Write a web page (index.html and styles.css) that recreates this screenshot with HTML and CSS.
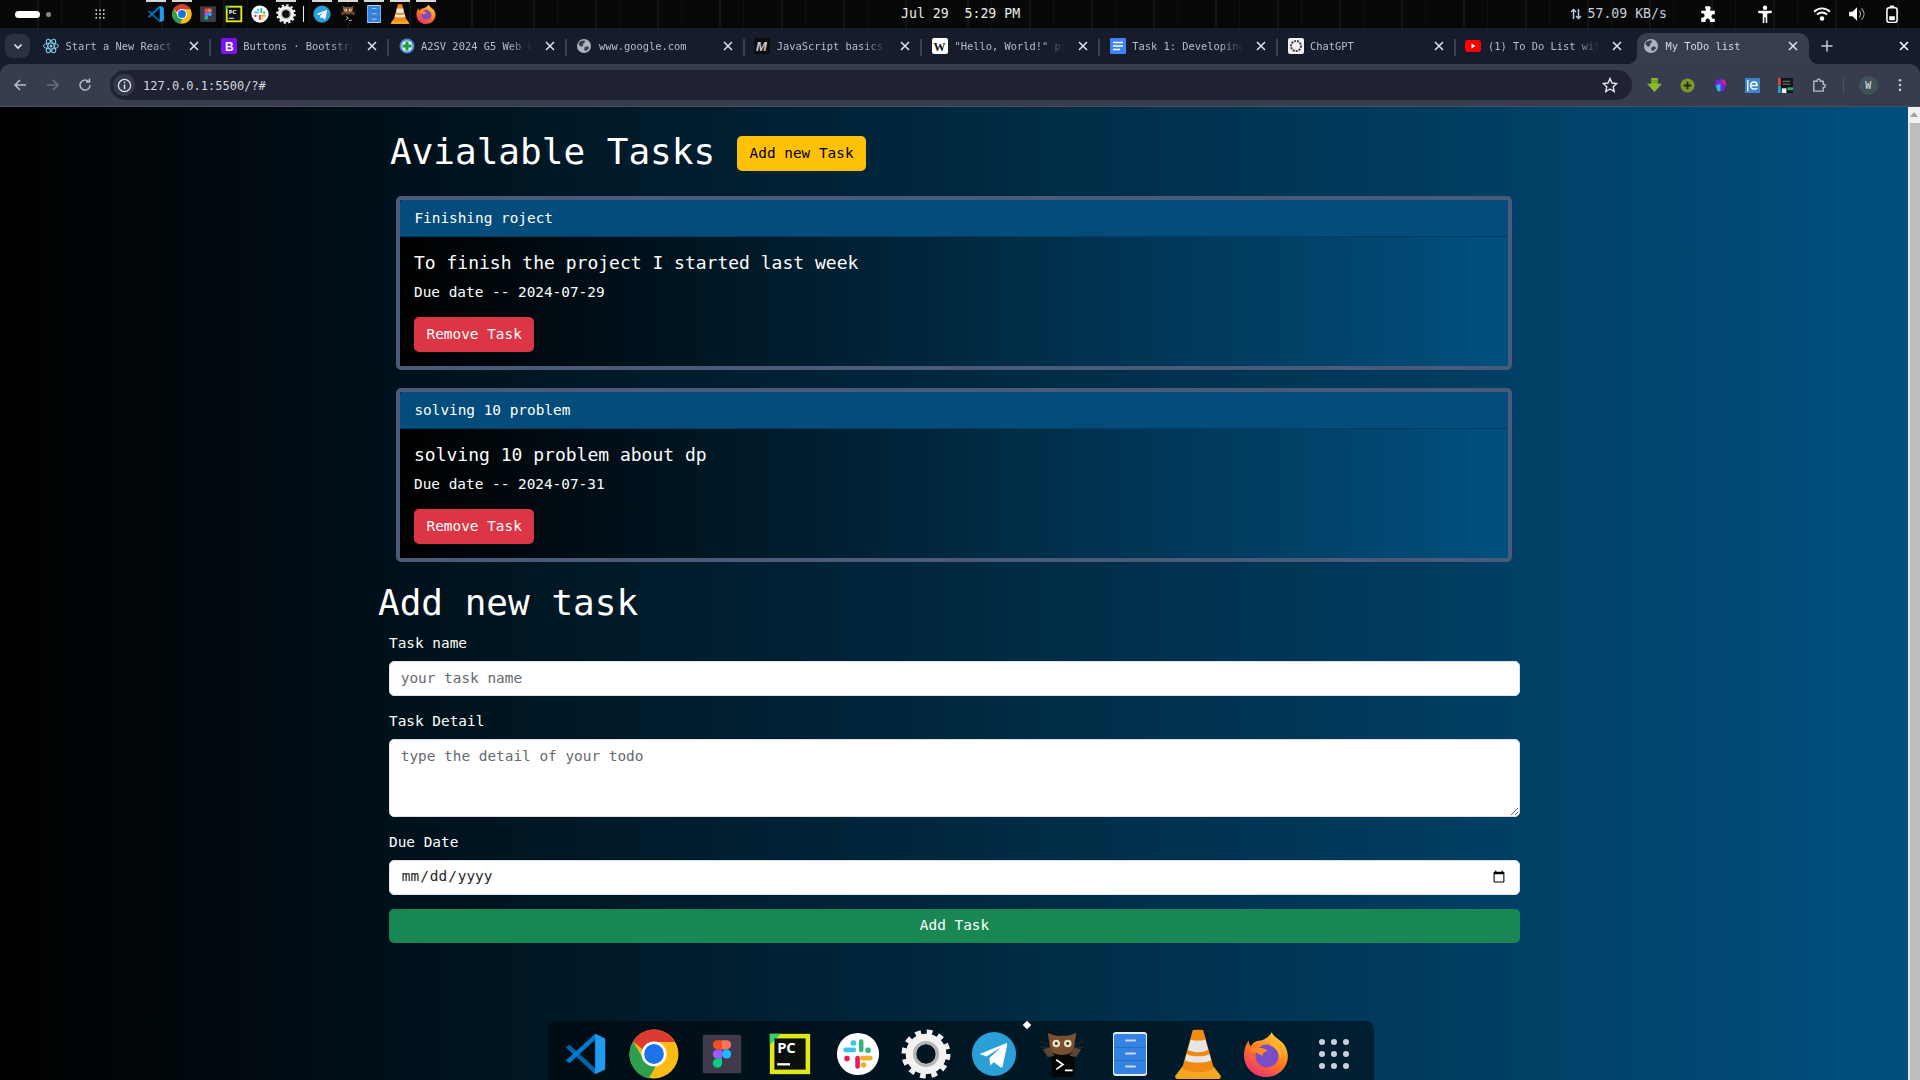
FILE: index.html
```html
<!DOCTYPE html>
<html lang="en">
<head>
<meta charset="utf-8">
<title>My ToDo list</title>
<link rel="stylesheet" href="styles.css">
</head>
<body>
<svg class="defs" aria-hidden="true">
  <defs>
    <linearGradient id="ffg" x1="0.800" y1="0" x2="0.200" y2="1">
      <stop offset="0" stop-color="#ffd43a"/>
      <stop offset="0.500" stop-color="#ff7a1a"/>
      <stop offset="1" stop-color="#ee2a7b"/>
    </linearGradient>
  </defs>
  <symbol id="vscode" viewBox="0 0 48 48">
    <path fill="#0065a9" d="M2 17l4-3 32 29-4 3z"/>
    <path fill="#007acc" d="M2 31l4 3L38 5l-4-3z"/>
    <path fill="#1f9cf0" d="M34 2l11 5v34l-11 5z"/>
  </symbol>
  <symbol id="chrome" viewBox="0 0 48 48">
    <circle cx="24" cy="24" r="23.5" fill="#fbbc16"/>
    <path fill="#db3a2e" d="M24 .5A23.500 23.500 0 0 1 44.400 12.500H24a11.500 11.500 0 0 0-10.600 7.500L4 12A23.500 23.500 0 0 1 24 .5z"/>
    <path fill="#2f9e4f" d="M4 12l10 17a11.500 11.500 0 0 0 12 6l-7 12.500A23.500 23.500 0 0 1 4 12z"/>
    <circle cx="24" cy="24" r="12" fill="#fff"/>
    <circle cx="24" cy="24" r="9.500" fill="#1a73e8"/>
  </symbol>
  <symbol id="figma" viewBox="0 0 48 48">
    <rect x="3" y="3" width="42" height="42" rx="2" fill="#3f3a4c"/>
    <path fill="#f24e1e" d="M24 9h-5a5 5 0 0 0 0 10h5z"/>
    <path fill="#ff7262" d="M24 9h5a5 5 0 0 1 0 10h-5z"/>
    <path fill="#a259ff" d="M24 19h-5a5 5 0 0 0 0 10h5z"/>
    <circle cx="29" cy="24" r="5" fill="#1abcfe"/>
    <path fill="#0acf83" d="M19 29h5v5a5 5 0 1 1-5-5z"/>
  </symbol>
  <symbol id="pycharm" viewBox="0 0 48 48">
    <rect x="2" y="2" width="44" height="44" fill="#dfe81a"/>
    <path fill="#2fd36e" d="M2 2h12L2 14z"/>
    <rect x="7" y="7" width="34" height="34" fill="#0b0f10"/>
    <rect x="10" y="34" width="14" height="2.500" fill="#fff"/>
  </symbol>
  <symbol id="slack" viewBox="0 0 48 48">
    <circle cx="24" cy="24" r="23" fill="#fff"/>
    <rect x="22" y="8" width="5" height="14" rx="2.500" fill="#2eb67d" transform="translate(3 0)"/>
    <rect x="32" y="17" width="6" height="6" rx="2.500" fill="#2eb67d"/>
    <rect x="8" y="17" width="14" height="5" rx="2.500" fill="#36c5f0"/>
    <rect x="16" y="9" width="6" height="6" rx="2.500" fill="#36c5f0"/>
    <rect x="21" y="26" width="5" height="14" rx="2.500" fill="#e01e5a"/>
    <rect x="9" y="26" width="6" height="6" rx="2.500" fill="#e01e5a"/>
    <rect x="26" y="26" width="14" height="5" rx="2.500" fill="#ecb22e"/>
    <rect x="27" y="33" width="6" height="6" rx="2.500" fill="#ecb22e"/>
  </symbol>
  <symbol id="gear" viewBox="0 0 48 48">
    <circle cx="24" cy="24" r="21" fill="none" stroke="#f2f2f2" stroke-width="5" stroke-dasharray="5.500 5.500"/>
    <circle cx="24" cy="24" r="14.500" fill="none" stroke="#f2f2f2" stroke-width="10"/>
    <circle cx="24" cy="24" r="11" fill="none" stroke="#b5b5b5" stroke-width="3"/>
  </symbol>
  <symbol id="telegram" viewBox="0 0 48 48">
    <circle cx="24" cy="24" r="23" fill="#2a9fd8"/>
    <path fill="#fff" d="M9 24l27-11c1-.4 2 .3 1.700 1.800L33 37c-.2 1.200-1.300 1.400-2.200.8l-7-5.300-3.800 3.600-.8-8 12-11-15 9.500z"/>
  </symbol>
  <symbol id="cat" viewBox="0 0 48 48">
    <rect x="13" y="24" width="24" height="24" rx="2" fill="#060606"/>
    <path fill="#7a4f31" d="M9 2l9 3h12l9-3-2 12c0 7-5 11-13 11s-13-4-13-11z"/>
    <path stroke="#222" stroke-width="1.500" d="M1 11l9 3M1 17h9M47 11l-9 3M47 17h-9"/>
    <path fill="#5d4434" d="M4 19l8-2 4 9-7 1zM44 19l-8-2-4 9 7 1z"/>
    <circle cx="18" cy="13" r="4" fill="#e8e0b8"/>
    <circle cx="30" cy="13" r="4" fill="#e8e0b8"/>
    <circle cx="18" cy="13" r="1.500" fill="#333"/>
    <circle cx="30" cy="13" r="1.500" fill="#333"/>
    <path fill="none" stroke="#fff" stroke-width="1.800" d="M18 30l7 5-7 5M27 41h8"/>
  </symbol>
  <symbol id="files" viewBox="0 0 34 44">
    <rect width="34" height="44" rx="3" fill="#e8eaed"/>
    <rect x="1" y="2" width="32" height="40" rx="2" fill="#3383e2"/>
    <path stroke="#2a6ec2" d="M1 15.500h32M1 28.500h32"/>
    <path stroke="#cfd6e0" stroke-width="2" stroke-linecap="round" d="M13 8.500h9M13 21.500h9M13 34.500h9"/>
  </symbol>
  <symbol id="vlc" viewBox="0 0 48 48">
    <path fill="#f5a623" d="M9 36L2 45c0 2 1 3 3 3h38c2 0 3-1 3-3l-7-9z"/>
    <path fill="#f08a12" d="M19 1c1-.5 9-.5 10 0l10 36c-3 6-27 6-30 0z"/>
    <path fill="#e6e6e6" d="M17 10c3 1.500 11 1.500 14 0l2.700 10c-4 3-15.400 3-19.400 0zM13 24c4 3 18 3 22 0l1.700 6c-5 3-20.400 3-25.400 0z"/>
  </symbol>
  <symbol id="firefox" viewBox="0 0 48 48">
    <path fill="url(#ffg)" d="M30 1c2 5 7 7 12 12 4 5 6 12 4 19-3 10-12 16-22 16C11 48 1 38 1 25c0-6 2-11 5-15 0 3 1 5 2 6 3-5 8-6 11-6 4-2 9-4 11-9z"/>
    <circle cx="25" cy="26" r="12" fill="#7b4bc8"/>
    <path fill="#ff8a1f" d="M7 20c5-3 14-4 19 1-4 0-5 2-6 5-3-3-9-4-13-6z"/>
    <path fill="#ffb21f" d="M33 12c6 3 8 10 6 18-1-8-5-13-11-15z"/>
  </symbol>
  <symbol id="grid9" viewBox="0 0 32 32">
    <g fill="#c9ced8">
      <circle cx="4" cy="4" r="3"/><circle cx="16" cy="4" r="3"/><circle cx="28" cy="4" r="3"/>
      <circle cx="4" cy="16" r="3"/><circle cx="16" cy="16" r="3"/><circle cx="28" cy="16" r="3"/>
      <circle cx="4" cy="28" r="3"/><circle cx="16" cy="28" r="3"/><circle cx="28" cy="28" r="3"/>
    </g>
  </symbol>
  <symbol id="close" viewBox="0 0 16 16">
    <path stroke="currentColor" stroke-width="1.500" d="M4 4l8 8M12 4l-8 8"/>
  </symbol>
  <symbol id="globe" viewBox="0 0 16 16">
    <circle cx="8" cy="8" r="7" fill="#aeb3bd"/>
    <path fill="#3a3f50" d="M3 4c2-1 5-2 6-1 0 2-2 2-2 4s-2 2-3 1-2-2-1-4zM9 9c2-1 4 0 4 1-1 2-3 3-4 3-1-1-1-3 0-4z"/>
  </symbol>
</svg>

<header class="topbar">
  <div class="activities"><span class="pill"></span><span class="dot"></span></div>
  <svg class="topbar-grid"><use href="#grid9"/></svg>
  <div class="mini-apps">
    <span class="mini on"><svg class="mini-18"><use href="#vscode"/></svg></span>
    <span class="mini on"><svg class="mini-20"><use href="#chrome"/></svg></span>
    <span class="mini"><svg class="mini-18"><use href="#figma"/></svg></span>
    <span class="mini"><svg class="mini-18" viewBox="0 0 48 48"><use href="#pycharm"/><text x="10" y="23" class="pc-text">PC</text></svg></span>
    <span class="mini"><svg class="mini-18"><use href="#slack"/></svg></span>
    <span class="mini on"><svg class="mini-20"><use href="#gear"/></svg></span>
    <span class="mini-sep"></span>
    <span class="mini on"><svg class="mini-18"><use href="#telegram"/></svg></span>
    <span class="mini on"><svg class="mini-18"><use href="#cat"/></svg></span>
    <span class="mini on"><svg class="mini-files"><use href="#files"/></svg></span>
    <span class="mini on"><svg class="mini-20"><use href="#vlc"/></svg></span>
    <span class="mini on"><svg class="mini-20"><use href="#firefox"/></svg></span>
  </div>
  <div class="clock">Jul 29&nbsp;&nbsp;5:29 PM</div>
  <div class="net"><svg class="net-arrows" viewBox="0 0 12 12"><path fill="none" stroke="#b7c9dc" stroke-width="1.500" d="M3.500 11V2M1 4l2.500-2.500L6 4M8.500 1v9M6 8l2.500 2.500L11 8"/></svg>57.09 KB/s</div>
  <div class="tray">
    <svg class="tray-icon" viewBox="0 0 16 16"><path fill="#fff" d="M6 1h3a1.500 1.500 0 0 1 1 2.500V5h4v3.500a2 2 0 1 0 0 3.500V15H9.500a2 2 0 1 0-3.500 0H2V11a2 2 0 1 0 0-3.500V5h4V3.500A1.500 1.500 0 0 1 6 1z"/></svg>
    <svg class="tray-icon" viewBox="0 0 16 16"><circle cx="8" cy="2.500" r="2" fill="#fff"/><path fill="#fff" d="M2 5h12v2l-4 .5V16H8.600v-5H7.400v5H6V7.500L2 7z"/></svg>
    <svg class="tray-icon" viewBox="0 0 16 16"><path fill="none" stroke="#fff" stroke-width="1.700" d="M1 6c4-4 10-4 14 0M3.500 8.500c3-2.500 6-2.500 9 0"/><circle cx="8" cy="12" r="2" fill="#fff"/></svg>
    <svg class="tray-icon" viewBox="0 0 16 16"><path fill="#fff" d="M1 6h3l4-4v12l-4-4H1z"/><path fill="none" stroke="#aaa" d="M10 5c1.500 1.500 1.500 4.500 0 6M12 3c3 3 3 7 0 10"/></svg>
    <svg class="tray-icon" viewBox="0 0 16 16"><rect x="3.500" y="2.500" width="9" height="13" rx="2" fill="none" stroke="#fff" stroke-width="1.400"/><rect x="6" y="0.500" width="4" height="2" fill="#fff"/><rect x="5.500" y="10" width="5" height="3.500" fill="#fff"/></svg>
  </div>
</header>

<nav class="tabstrip">
  <button class="tab-search" type="button"><svg class="chevron" viewBox="0 0 12 12"><path fill="none" stroke="#e3e5ea" stroke-width="1.700" d="M2.500 4.500L6 8l3.500-3.500"/></svg></button>
  <div class="tabs">
    <div class="tab"><svg class="fav" viewBox="0 0 16 16"><g fill="none" stroke="#7fc8e8"><ellipse cx="8" cy="8" rx="7.500" ry="3"/><ellipse cx="8" cy="8" rx="7.500" ry="3" transform="rotate(60 8 8)"/><ellipse cx="8" cy="8" rx="7.500" ry="3" transform="rotate(120 8 8)"/></g><circle cx="8" cy="8" r="1.500" fill="#7fc8e8"/></svg><span class="tab-title">Start a New React</span><svg class="tab-x"><use href="#close"/></svg></div>
    <div class="tab"><svg class="fav" viewBox="0 0 16 16"><rect width="16" height="16" rx="2" fill="#7a12f5"/><text x="4" y="12.500" class="fav-text fav-white">B</text></svg><span class="tab-title">Buttons · Bootstra</span><svg class="tab-x"><use href="#close"/></svg></div>
    <div class="tab"><svg class="fav" viewBox="0 0 16 16"><circle cx="8" cy="8" r="6.500" fill="#dcefff" stroke="#4a86c8" stroke-width="2"/><path stroke="#1f9d3a" stroke-width="3" d="M8 3.500v9M3.500 8h9"/></svg><span class="tab-title">A2SV 2024 G5 Web L</span><svg class="tab-x"><use href="#close"/></svg></div>
    <div class="tab"><svg class="fav"><use href="#globe"/></svg><span class="tab-title">www.google.com</span><svg class="tab-x"><use href="#close"/></svg></div>
    <div class="tab"><svg class="fav" viewBox="0 0 16 16"><rect width="16" height="16" fill="#0c0c0c"/><text x="2" y="13" class="fav-text fav-m">M</text></svg><span class="tab-title">JavaScript basics</span><svg class="tab-x"><use href="#close"/></svg></div>
    <div class="tab"><svg class="fav" viewBox="0 0 16 16"><rect width="16" height="16" rx="2" fill="#fff"/><text x="1.500" y="12.500" class="fav-text fav-w">W</text></svg><span class="tab-title">"Hello, World!" pr</span><svg class="tab-x"><use href="#close"/></svg></div>
    <div class="tab"><svg class="fav" viewBox="0 0 16 16"><rect width="16" height="16" rx="1" fill="#3f83f5"/><path stroke="#fff" stroke-width="1.600" d="M3 4.500h10M3 8h10M3 11.500h7"/></svg><span class="tab-title">Task 1: Developing</span><svg class="tab-x"><use href="#close"/></svg></div>
    <div class="tab"><svg class="fav" viewBox="0 0 16 16"><rect width="16" height="16" rx="2" fill="#f2f2f2"/><circle cx="8" cy="8" r="5" fill="none" stroke="#444" stroke-width="2" stroke-dasharray="2 1"/></svg><span class="tab-title">ChatGPT</span><svg class="tab-x"><use href="#close"/></svg></div>
    <div class="tab tab-before"><svg class="fav" viewBox="0 0 16 16"><rect y="2" width="16" height="12" rx="3" fill="#f00"/><path fill="#fff" d="M6.500 5.500v5l4-2.500z"/></svg><span class="tab-title">(1) To Do List wit</span><svg class="tab-x"><use href="#close"/></svg></div>
    <div class="tab tab-active"><svg class="fav"><use href="#globe"/></svg><span class="tab-title">My ToDo list</span><svg class="tab-x"><use href="#close"/></svg></div>
  </div>
  <svg class="tab-new" viewBox="0 0 16 16"><path stroke="#c9ccd4" stroke-width="1.500" d="M8 2.500v11M2.500 8h11"/></svg>
  <svg class="win-close"><use href="#close"/></svg>
</nav>

<div class="toolbar">
  <div class="nav-buttons">
    <svg class="nav-icon" viewBox="0 0 16 16"><path fill="none" stroke="#b9bcc8" stroke-width="1.500" d="M14 8H3M8 3L3 8l5 5"/></svg>
    <svg class="nav-icon" viewBox="0 0 16 16"><path fill="none" stroke="#6c7080" stroke-width="1.500" d="M2 8h11M8 3l5 5-5 5"/></svg>
    <svg class="nav-icon" viewBox="0 0 16 16"><path fill="none" stroke="#b9bcc8" stroke-width="1.500" d="M13 8a5 5 0 1 1-1.500-3.500M12.500 1.500v3.500H9"/></svg>
  </div>
  <div class="omnibox">
    <span class="site-chip"><svg class="site-icon" viewBox="0 0 16 16"><circle cx="8" cy="8" r="6.500" fill="none" stroke="#e3e5ea" stroke-width="1.400"/><path stroke="#e3e5ea" stroke-width="1.500" d="M8 7v5M8 4v1.600"/></svg></span>
    <span class="url">127.0.0.1:5500/?#</span>
    <svg class="star" viewBox="0 0 16 16"><path fill="none" stroke="#e3e5ea" stroke-width="1.400" d="M8 1.500l2 4.500 4.800.5-3.600 3.200 1 4.800L8 12l-4.200 2.500 1-4.800L1.200 6.500 6 6z"/></svg>
  </div>
  <div class="extensions">
    <svg class="ext" viewBox="0 0 16 16"><path fill="#8cb82b" d="M4.500 0h7v6H16l-8 9-8-9h4.500z"/><path fill="#5f8a14" d="M5 2h6v1H5zM5 4h6v1H5z"/></svg>
    <svg class="ext" viewBox="0 0 16 16"><circle cx="8" cy="8" r="7.500" fill="#7a9a22"/><path stroke="#1f2233" stroke-width="2" d="M8 4v8M4 8h8"/></svg>
    <svg class="ext" viewBox="0 0 16 16"><path fill="#7a22e0" d="M3 3l5-2 5 2 1 5-3 6H5L2 8z"/><path fill="#16c7d8" d="M3 8l5-2v8H5z"/><path fill="#e02280" d="M10 1l3 2 1 4-4-1z"/></svg>
    <svg class="ext" viewBox="0 0 16 16"><rect width="16" height="16" fill="#3d85c6"/><path fill="none" stroke="#fff" stroke-width="1.400" d="M3 2v12M6 8h7c0-5-7-5-7 0s6 4 7 3"/></svg>
    <svg class="ext" viewBox="0 0 16 16"><rect width="16" height="16" fill="#141414"/><rect width="3" height="8" fill="#e0442c"/><rect y="8" width="3" height="8" fill="#1fa0d8"/><rect x="4" y="11" width="5" height="5" fill="#eee"/><rect x="10" y="10" width="6" height="3" fill="#18b46b"/><rect x="5" y="3" width="8" height="1" fill="#888"/><rect x="5" y="6" width="8" height="1" fill="#888"/></svg>
    <svg class="ext" viewBox="0 0 16 16"><path fill="none" stroke="#b9bcc8" stroke-width="1.500" d="M3 3.500h3.500V3a1.700 1.700 0 0 1 3.400 0v.5H13v3.200h.5a1.700 1.700 0 0 1 0 3.400H13V14H3z"/></svg>
    <span class="tool-sep"></span>
    <span class="avatar">W</span>
    <svg class="kebab" viewBox="0 0 4 16"><g fill="#c9ccd4"><circle cx="2" cy="2.500" r="1.500"/><circle cx="2" cy="8" r="1.500"/><circle cx="2" cy="13.500" r="1.500"/></g></svg>
  </div>
</div>

<div class="viewport">
  <main class="page">
    <div class="container">
      <section>
        <div class="tasks-head">
          <h1 class="title">Avialable Tasks</h1>
          <button class="btn btn-warning" type="button">Add new Task</button>
        </div>
        <article class="card">
          <div class="card-header">Finishing roject</div>
          <div class="card-body">
            <h4 class="card-title">To finish the project I started last week</h4>
            <p class="card-text">Due date -- 2024-07-29</p>
            <button class="btn btn-danger" type="button">Remove Task</button>
          </div>
        </article>
        <article class="card">
          <div class="card-header">solving 10 problem</div>
          <div class="card-body">
            <h4 class="card-title">solving 10 problem about dp</h4>
            <p class="card-text">Due date -- 2024-07-31</p>
            <button class="btn btn-danger" type="button">Remove Task</button>
          </div>
        </article>
      </section>
      <section>
        <h1 class="title title-form">Add new task</h1>
        <form class="form">
          <label class="label" for="name">Task name</label>
          <input class="control control-name" id="name" type="text" placeholder="your task name">
          <label class="label" for="detail">Task Detail</label>
          <textarea class="control control-area" id="detail" placeholder="type the detail of your todo"></textarea>
          <label class="label" for="due">Due Date</label>
          <input class="control control-date" id="due" type="date">
          <button class="btn btn-success" type="button">Add Task</button>
        </form>
      </section>
    </div>
  </main>
  <aside class="scrollbar"><span class="scroll-up"></span></aside>
  <div class="dock">
    <span class="dock-item"><svg class="dock-44"><use href="#vscode"/></svg></span>
    <span class="dock-item"><svg class="dock-50"><use href="#chrome"/></svg></span>
    <span class="dock-item"><svg class="dock-44"><use href="#figma"/></svg></span>
    <span class="dock-item"><svg class="dock-44" viewBox="0 0 48 48"><use href="#pycharm"/><text x="10" y="23" class="pc-text">PC</text></svg></span>
    <span class="dock-item"><svg class="dock-44"><use href="#slack"/></svg></span>
    <span class="dock-item"><svg class="dock-50"><use href="#gear"/></svg></span>
    <span class="dock-item"><svg class="dock-46"><use href="#telegram"/></svg><i class="dock-dot"></i></span>
    <span class="dock-item"><svg class="dock-46"><use href="#cat"/></svg></span>
    <span class="dock-item"><svg class="dock-files"><use href="#files"/></svg></span>
    <span class="dock-item"><svg class="dock-50"><use href="#vlc"/></svg></span>
    <span class="dock-item"><svg class="dock-46"><use href="#firefox"/></svg></span>
    <span class="dock-item"><svg class="dock-grid"><use href="#grid9"/></svg></span>
  </div>
</div>
</body>
</html>
```

FILE: styles.css
```css
* { box-sizing: border-box; }

html, body { margin: 0; height: 100%; }

body {
  display: flex;
  flex-direction: column;
  width: 1920px;
  height: 1080px;
  overflow: hidden;
  font-family: "DejaVu Sans Mono", "Liberation Mono", monospace;
  color: #fff;
  background: #171c2d;
}

.defs { position: absolute; width: 0; height: 0; }

.pc-text { font: 700 16px "Open Sans", sans-serif; fill: #fff; }
.fav-text { font: 700 12px "Liberation Sans", sans-serif; }
.fav-white { fill: #fff; }
.fav-m { fill: #ccc; font-style: italic; font-size: 13px; }
.fav-w { fill: #111; font-family: "Liberation Serif", serif; }

/* top bar */
.topbar {
  position: relative;
  display: flex;
  align-items: center;
  flex: 0 0 28px;
  background-color: #070707;
  background-image: repeating-linear-gradient(90deg, transparent 0 37px, #141414 37px 39px, transparent 39px 61px, #0f0f0f 61px 62px);
}

.activities { display: flex; align-items: center; gap: 6px; margin-left: 15px; width: 80px; }
.pill { width: 25px; height: 7px; border-radius: 4px; background: #fff; }
.dot { width: 5px; height: 5px; border-radius: 50%; background: #888; }

.topbar-grid { width: 10px; height: 10px; margin-right: 38px; }

.mini-apps { display: flex; align-items: center; height: 28px; }
.mini { position: relative; display: flex; align-items: center; justify-content: center; width: 26px; height: 28px; }
.mini.on::before { content: ""; position: absolute; top: 0; left: 3px; width: 20px; height: 2px; background: #d8d8d8; }
.mini-18 { width: 18px; height: 18px; }
.mini-20 { width: 20px; height: 20px; }
.mini-files { width: 14px; height: 18px; }
.mini-sep { width: 1px; height: 16px; margin: 0 5px 0 4px; background: #eee; }

.clock {
  position: absolute;
  left: 901px;
  top: 0;
  font-size: 13.200px;
  line-height: 27px;
  color: #ececec;
}

.net {
  position: absolute;
  left: 1570px;
  top: 0;
  display: flex;
  align-items: center;
  height: 27px;
  font-size: 13.200px;
  color: #c5d0de;
}
.net-arrows { width: 12px; height: 12px; margin-right: 5.500px; }

.tray { position: absolute; right: 19px; top: 5px; display: flex; gap: 0; }
.tray-icon { width: 18px; height: 18px; }
.tray-icon:nth-child(1) { margin-right: 39px; }
.tray-icon:nth-child(2) { margin-right: 39px; }
.tray-icon:nth-child(3) { margin-right: 17px; }
.tray-icon:nth-child(4) { margin-right: 17px; }

/* tab strip */
.tabstrip {
  position: relative;
  display: flex;
  align-items: center;
  flex: 0 0 36px;
  background: #171c2d;
}

.tab-search {
  display: flex;
  align-items: center;
  justify-content: center;
  width: 25px;
  height: 24px;
  margin: 0 3.500px 0 5px;
  padding: 0;
  border: 0;
  border-radius: 8px;
  background: #2b3042;
}
.chevron { width: 12px; height: 12px; }

.tabs { display: flex; height: 36px; }

.tab {
  position: relative;
  display: flex;
  align-items: center;
  width: 177.800px;
  height: 36px;
  padding: 0 9px 0 9.500px;
  font-size: 10.400px;
  color: #b8bcc8;
}
.tab::after {
  content: "";
  position: absolute;
  right: 0;
  top: 11px;
  width: 2px;
  height: 17px;
  background: #3a3f52;
}
.tab-before::after { display: none; }

.fav { flex: 0 0 16px; width: 16px; height: 16px; margin-right: 6.500px; }

.tab-title {
  flex: 1;
  min-width: 0;
  white-space: nowrap;
  -webkit-mask-image: linear-gradient(90deg, #000 72%, transparent 92%);
  mask-image: linear-gradient(90deg, #000 72%, transparent 92%);
}

.tab-x { flex: 0 0 16px; width: 16px; height: 16px; color: #e3e5ea; }

.tab-active {
  width: 172.500px;
  height: 31px;
  margin: 5px 0 0 3px;
  padding: 0 8px 5px 6.300px;
  border-radius: 10px 10px 0 0;
  background: #383d50;
  color: #d6d9e0;
}
.tab-active::before,
.tab-active::after {
  content: "";
  position: absolute;
  top: auto;
  bottom: 0;
  width: 10px;
  height: 10px;
}
.tab-active::before {
  left: -10px;
  background: radial-gradient(circle at 0 0, transparent 10px, #383d50 10.500px);
}
.tab-active::after {
  right: -10px;
  background: radial-gradient(circle at 100% 0, transparent 10px, #383d50 10.500px);
}

.tab-new { width: 16px; height: 16px; margin-left: 10px; }
.win-close { position: absolute; right: 8px; top: 10px; width: 16px; height: 16px; color: #fff; }

/* toolbar */
.toolbar {
  display: flex;
  align-items: center;
  flex: 0 0 43px;
  background: #373c4f;
  border-bottom: 1px solid #4a4e5c;
  border-radius: 10px 10px 0 0;
}

.nav-buttons {
  display: flex;
  align-items: center;
  width: 110px;
  height: 30px;
  gap: 16.500px;
  padding-left: 12px;
}
.nav-icon { width: 16px; height: 16px; }

.omnibox {
  display: flex;
  align-items: center;
  width: 1522px;
  height: 30px;
  padding: 0 9px 0 3px;
  border-radius: 15px;
  background: #1f2233;
}
.site-chip {
  display: flex;
  align-items: center;
  justify-content: center;
  width: 22px;
  height: 22px;
  margin-right: 8px;
  border-radius: 50%;
  background: #33384a;
}
.site-icon { width: 15px; height: 15px; }
.url { flex: 1; margin-top: 2px; font-size: 12px; color: #d5d8de; }
.star { width: 16px; height: 16px; margin-right: 5px; }

.extensions { position: relative; display: flex; align-items: center; flex: 1; padding-left: 15px; }
.ext { width: 15px; height: 15px; margin-right: 17.800px; }
.tool-sep { width: 1px; height: 16px; margin: 0 15px 0 -1px; background: #4c5163; }
.avatar {
  display: flex;
  align-items: center;
  justify-content: center;
  width: 19px;
  height: 19px;
  margin-right: 20px;
  border-radius: 50%;
  background: #3e5257;
  font-size: 10px;
  color: #e3e5ea;
}
.kebab { width: 4px; height: 14px; }

/* page */
.viewport {
  position: relative;
  display: flex;
  flex: 1;
  min-height: 0;
}

.page {
  flex: 1;
  background: linear-gradient(90deg, #000, #00507f);
}

.container { width: 1156px; margin: 0 auto; padding-top: 23px; }

.title {
  margin: 0;
  font-size: 36px;
  font-weight: 400;
  line-height: 43.200px;
}
.title-form { padding-left: 2px; }

.tasks-head { display: flex; align-items: center; gap: 22px; padding-left: 14px; margin-bottom: 23px; }

.btn {
  padding: 5.400px 11.500px;
  border: 1px solid transparent;
  border-radius: 5px;
  font-family: inherit;
  font-size: 14.400px;
  line-height: 21.600px;
}
.btn-warning { margin-top: 4px; background: #ffc107; color: #000; }
.btn-danger { background: #dc3545; color: #fff; }
.btn-success { background: #198754; color: #fff; width: 100%; margin-top: 14.400px; }

.card {
  margin: 0 20px 18.500px;
  border: 4px solid #4b5a78;
  border-radius: 5px;
  background: linear-gradient(90deg, #000, #00507f);
  font-size: 14.400px;
}

.card-header {
  height: 37px;
  padding-left: 14.400px;
  line-height: 37px;
  background: #034c7b;
  border-bottom: 1px solid rgba(0, 0, 0, 0.2);
  border-radius: 2px 2px 0 0;
}

.card-body { padding: 14.400px 14.400px 14.400px 14px; }

.card-title {
  margin: 0 0 9px;
  font-size: 18px;
  font-weight: 400;
  line-height: 21.600px;
}

.card-text { margin: 0 0 13.400px; line-height: 21.600px; }

.form { display: flex; flex-direction: column; padding: 8.700px 12px 0 13px; }

.label { display: block; margin-bottom: 6.400px; font-size: 14.400px; line-height: 21.600px; }

.control {
  display: block;
  width: 100%;
  height: 35px;
  padding: 5.400px 10.800px;
  border: 1px solid #dee2e6;
  border-radius: 5px;
  background: #fff;
  color: #212529;
  font-family: inherit;
  font-size: 14.400px;
  line-height: 21.600px;
  outline: 0;
}
.control::placeholder { color: #65696e; opacity: 1; }
.control-name { margin-bottom: 15.200px; }
.control-area { height: 78px; margin-bottom: 15px; padding-top: 6.400px; }
.control-date { margin-bottom: 0; }

/* scrollbar */
.scrollbar {
  position: relative;
  flex: 0 0 12px;
  background: #e8e8e8;
  padding-left: 2px;
}
.scrollbar::before {
  content: "";
  display: block;
  height: 100%;
  background: #bdbdbd;
}
.scroll-up {
  position: absolute;
  left: 0;
  top: 0;
  width: 12px;
  height: 16px;
  background: #f1f1f1;
}
.scroll-up::before {
  content: "";
  position: absolute;
  left: 2px;
  top: 5px;
  border: 4px solid transparent;
  border-top: 0;
  border-bottom: 5px solid #a3a3a3;
}

/* dock (floats over the page) */
.dock {
  position: absolute;
  left: 548px;
  bottom: 0;
  display: flex;
  align-items: center;
  width: 826px;
  height: 59px;
  padding: 0 6px 0 4px;
  border-radius: 8px 8px 0 0;
  background: rgba(0, 0, 0, 0.45);
}
.dock-item {
  position: relative;
  display: flex;
  align-items: center;
  justify-content: center;
  width: 68px;
  height: 59px;
  padding-top: 7px;
}
.dock-44 { width: 44px; height: 44px; }
.dock-46 { width: 46px; height: 46px; }
.dock-50 { width: 50px; height: 50px; }
.dock-files { width: 34px; height: 44px; }
.dock-grid { width: 32px; height: 32px; }
.dock-dot {
  position: absolute;
  right: -1.500px;
  top: 1px;
  width: 6px;
  height: 6px;
  background: #fff;
  transform: rotate(45deg);
}
```
